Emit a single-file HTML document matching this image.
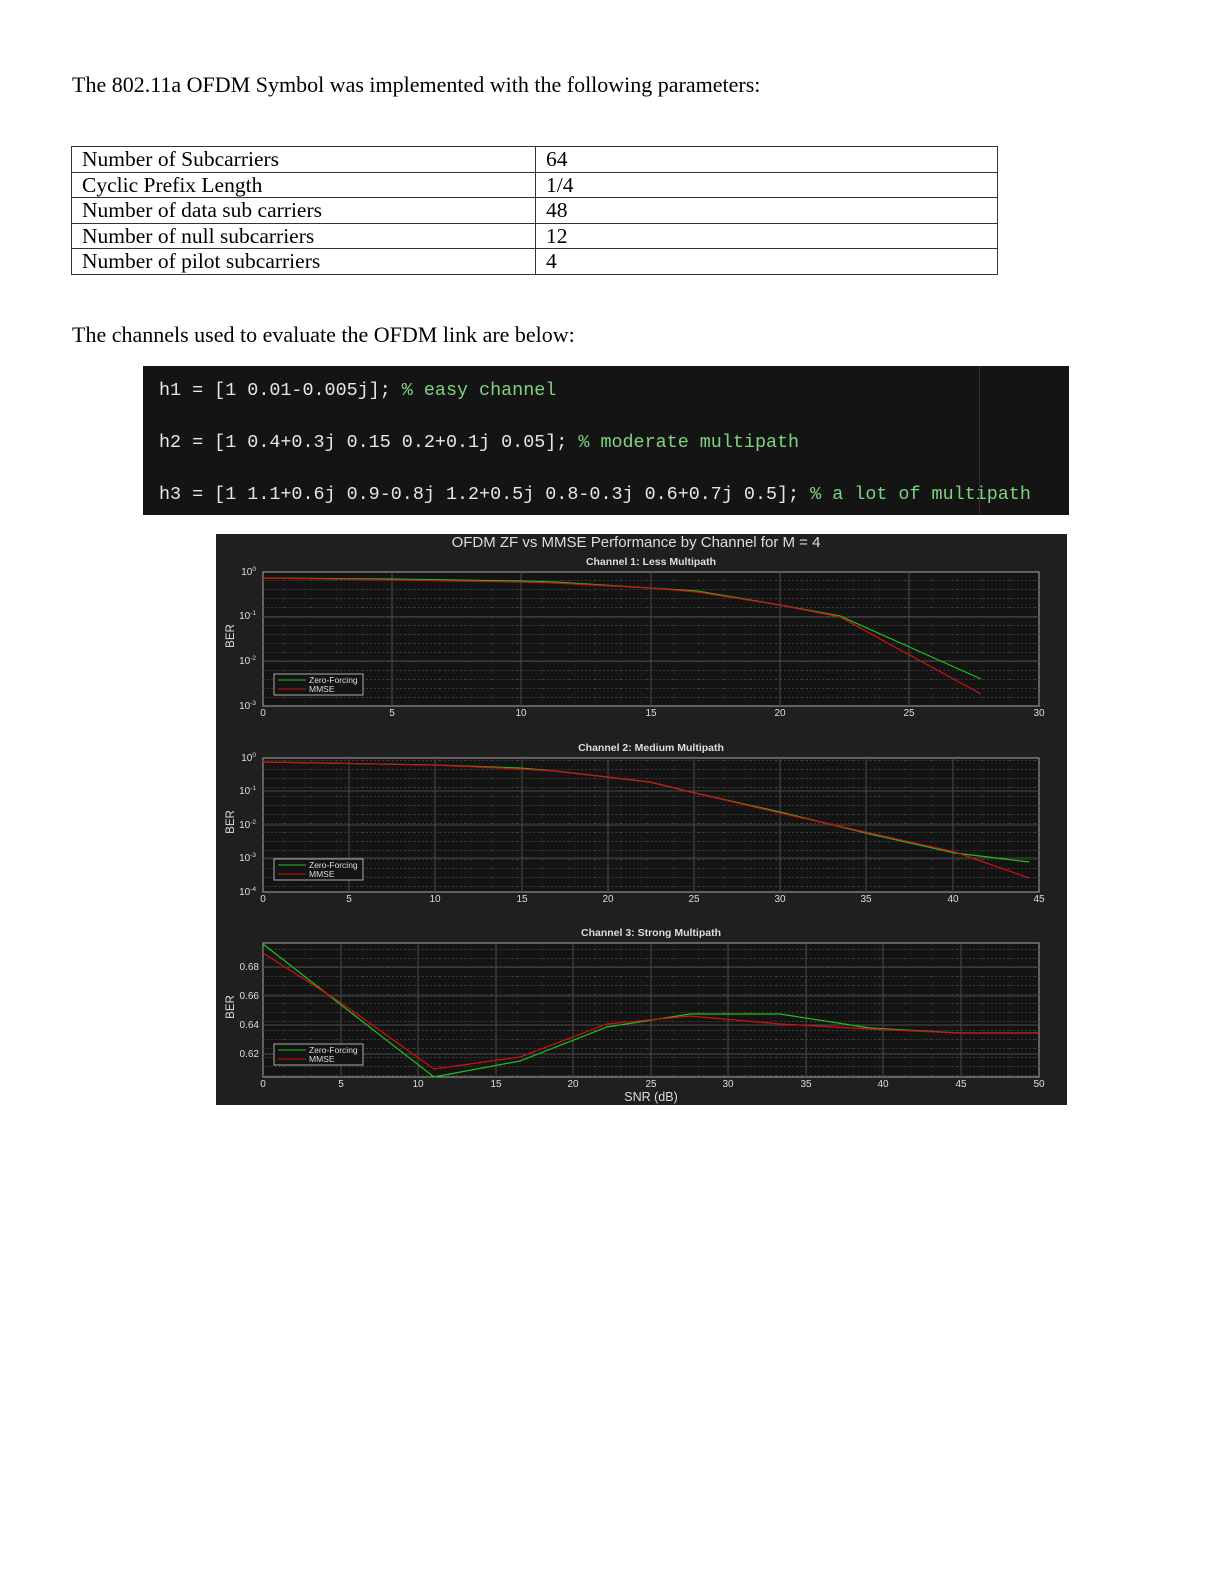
<!DOCTYPE html>
<html><head><meta charset="utf-8"><style>
body{margin:0;background:#fff;width:1224px;height:1584px;position:relative;font-family:"Liberation Serif",serif;color:#000}
.p{position:absolute;left:72px;font-size:22px;margin:0}
table{position:absolute;left:71px;top:146px;border-collapse:collapse;font-size:21.5px;width:927px}
td{border:1.5px solid #333;padding:0 10px;height:24.5px;line-height:24px}
td:first-child{width:443px}
.code{position:absolute;left:143px;top:366px;width:926px;height:149px;background:#141414;font-family:"Liberation Mono",monospace;font-size:18.4px;color:#e6e6e6}
.code div{position:absolute;left:16px;white-space:pre}
.c{color:#7fd37f}
</style></head><body>
<p class="p" style="top:72px">The 802.11a OFDM Symbol was implemented with the following parameters:</p>
<table>
<tr><td>Number of Subcarriers</td><td>64</td></tr>
<tr><td>Cyclic Prefix Length</td><td>1/4</td></tr>
<tr><td>Number of data sub carriers</td><td>48</td></tr>
<tr><td>Number of null subcarriers</td><td>12</td></tr>
<tr><td>Number of pilot subcarriers</td><td>4</td></tr>
</table>
<p class="p" style="top:322px">The channels used to evaluate the OFDM link are below:</p>
<div class="code">
<div style="top:14px">h1 = [1 0.01-0.005j]; <span class="c">% easy channel</span></div>
<div style="top:66px">h2 = [1 0.4+0.3j 0.15 0.2+0.1j 0.05]; <span class="c">% moderate multipath</span></div>
<div style="top:118px">h3 = [1 1.1+0.6j 0.9-0.8j 1.2+0.5j 0.8-0.3j 0.6+0.7j 0.5]; <span class="c">% a lot of multipath</span></div>
<div style="left:836px;top:0;width:1px;height:149px;background:#333"></div>
</div>
<svg style="position:absolute;left:0;top:0" width="1224" height="1584" font-family="Liberation Sans,sans-serif">
<defs>
<pattern id="g" width="25.87" height="9" patternUnits="userSpaceOnUse"><path d="M0 4.5H25.87" stroke="#3a3a3a" stroke-dasharray="2 2" stroke-width="1"/></pattern>
</defs>
<rect x="216" y="534" width="851" height="571" fill="#1f1f1f"/>
<text x="636" y="547" fill="#ddd" font-size="15" text-anchor="middle">OFDM ZF vs MMSE Performance by Channel for M = 4</text>
<g font-size="10.5" fill="#ddd" font-weight="bold" text-anchor="middle">
<text x="651" y="565">Channel 1: Less Multipath</text>
<text x="651" y="751">Channel 2: Medium Multipath</text>
<text x="651" y="936">Channel 3: Strong Multipath</text>
</g>
<g stroke="#aaa" fill="#141414" stroke-width="1">
<rect x="263" y="572" width="776" height="134"/>
<rect x="263" y="758" width="776" height="134"/>
<rect x="263" y="943" width="776" height="134"/>
</g>
<g fill="url(#g)"><rect x="263" y="572" width="776" height="134"/><rect x="263" y="758" width="776" height="134"/><rect x="263" y="943" width="776" height="134"/></g>
<g stroke="#4a4a4a" stroke-width="1">
<path d="M392 572V706M521 572V706M651 572V706M780 572V706M909 572V706M263 617H1039M263 661H1039"/>
<path d="M349 758V892M435 758V892M522 758V892M608 758V892M694 758V892M780 758V892M866 758V892M953 758V892M263 791H1039M263 825H1039M263 858H1039"/>
<path d="M341 943V1077M418 943V1077M496 943V1077M573 943V1077M651 943V1077M728 943V1077M806 943V1077M883 943V1077M961 943V1077M263 967H1039M263 996H1039M263 1025H1039M263 1054H1039"/>
</g>
<g font-size="10" fill="#ddd" text-anchor="middle">
<text x="263" y="716">0</text><text x="392" y="716">5</text><text x="521" y="716">10</text><text x="651" y="716">15</text><text x="780" y="716">20</text><text x="909" y="716">25</text><text x="1039" y="716">30</text>
<text x="263" y="902">0</text><text x="349" y="902">5</text><text x="435" y="902">10</text><text x="522" y="902">15</text><text x="608" y="902">20</text><text x="694" y="902">25</text><text x="780" y="902">30</text><text x="866" y="902">35</text><text x="953" y="902">40</text><text x="1039" y="902">45</text>
<text x="263" y="1087">0</text><text x="341" y="1087">5</text><text x="418" y="1087">10</text><text x="496" y="1087">15</text><text x="573" y="1087">20</text><text x="651" y="1087">25</text><text x="728" y="1087">30</text><text x="806" y="1087">35</text><text x="883" y="1087">40</text><text x="961" y="1087">45</text><text x="1039" y="1087">50</text>
<text x="651" y="1101" font-size="12.5">SNR (dB)</text>
</g>
<g font-size="10" fill="#ddd" text-anchor="end">
<text x="256" y="575">10<tspan dy="-4" font-size="6.5">0</tspan></text>
<text x="256" y="619">10<tspan dy="-4" font-size="6.5">-1</tspan></text>
<text x="256" y="664">10<tspan dy="-4" font-size="6.5">-2</tspan></text>
<text x="256" y="709">10<tspan dy="-4" font-size="6.5">-3</tspan></text>
<text x="256" y="761">10<tspan dy="-4" font-size="6.5">0</tspan></text>
<text x="256" y="794">10<tspan dy="-4" font-size="6.5">-1</tspan></text>
<text x="256" y="828">10<tspan dy="-4" font-size="6.5">-2</tspan></text>
<text x="256" y="861">10<tspan dy="-4" font-size="6.5">-3</tspan></text>
<text x="256" y="895">10<tspan dy="-4" font-size="6.5">-4</tspan></text>
<text x="259" y="970">0.68</text><text x="259" y="999">0.66</text><text x="259" y="1028">0.64</text><text x="259" y="1057">0.62</text>
</g>
<g font-size="11.5" fill="#ddd" text-anchor="middle">
<text transform="translate(234 636) rotate(-90)">BER</text>
<text transform="translate(234 822) rotate(-90)">BER</text>
<text transform="translate(234 1007) rotate(-90)">BER</text>
</g>
<g fill="none" stroke-width="1.2">
<polyline stroke="#1fbf1f" points="263,578 392,579 521,581 555,582 650,588 697,591 780,605 840,616 981,679"/>
<polyline stroke="#d01010" points="263,578 392,580 521,582 555,583 650,588 697,592 780,605 840,617 981,694"/>
<polyline stroke="#1fbf1f" points="263,762 435,765 520,768 555,771 650,782 695,793 780,812 870,834 955,853 1029,862"/>
<polyline stroke="#d01010" points="263,762 435,765 520,769 555,771 650,782 695,793 780,813 870,833 955,852 1029,878"/>
<polyline stroke="#1fbf1f" points="263,944 340,1004 434,1077 520,1061 607,1027 690,1014 780,1014 870,1028 960,1033 1039,1033"/>
<polyline stroke="#d01010" points="263,953 340,1002 434,1069 520,1057 607,1024 690,1016 780,1024 870,1029 960,1033 1039,1033"/>
</g>
<g font-size="8.5" fill="#ddd">
<rect x="274" y="674" width="89" height="21" fill="#141414" stroke="#aaa"/>
<path d="M278 680H306" stroke="#1fbf1f"/><path d="M278 689H306" stroke="#d01010"/>
<text x="309" y="683">Zero-Forcing</text><text x="309" y="692">MMSE</text>
<rect x="274" y="859" width="89" height="21" fill="#141414" stroke="#aaa"/>
<path d="M278 865H306" stroke="#1fbf1f"/><path d="M278 874H306" stroke="#d01010"/>
<text x="309" y="868">Zero-Forcing</text><text x="309" y="877">MMSE</text>
<rect x="274" y="1044" width="89" height="21" fill="#141414" stroke="#aaa"/>
<path d="M278 1050H306" stroke="#1fbf1f"/><path d="M278 1059H306" stroke="#d01010"/>
<text x="309" y="1053">Zero-Forcing</text><text x="309" y="1062">MMSE</text>
</g>
</svg>
</body></html>
